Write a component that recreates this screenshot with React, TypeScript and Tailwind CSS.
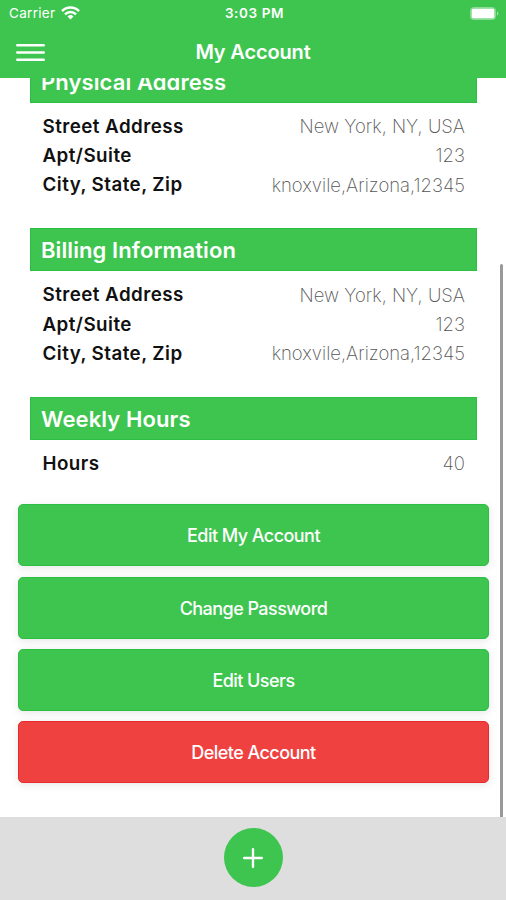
import clsx from "clsx";

const address = [
  { label: "Street Address", value: "New York, NY, USA" },
  { label: "Apt/Suite", value: "123" },
  { label: "City, State, Zip", value: "knoxvile,Arizona,12345" },
];

const sections = [
  { title: "Physical Address", rows: address },
  { title: "Billing Information", rows: address },
  { title: "Weekly Hours", rows: [{ label: "Hours", value: "40" }] },
];

const actions = [
  { label: "Edit My Account", danger: false },
  { label: "Change Password", danger: false },
  { label: "Edit Users", danger: false },
  { label: "Delete Account", danger: true },
];

function StatusBar() {
  return (
    <div className="grid h-[26px] grid-cols-3 items-center pl-[9px] pr-[6px] text-[13.5px]">
      <div className="flex items-center gap-[6px]">
        <span className="pt-px tracking-[0.3px]">Carrier</span>
        <svg width="19" height="14" viewBox="0 0 19 14" fill="none" stroke="currentColor" strokeWidth="2.5">
          <path d="M1 5.1a12 12 0 0 1 17 0" />
          <path d="M4 8.3a7.8 7.8 0 0 1 11 0" />
          <path d="M9.5 13.6 6.5 10.5a4.3 4.3 0 0 1 6 0z" fill="currentColor" stroke="none" />
        </svg>
      </div>
      <span className="pt-px text-center font-semibold tracking-[0.6px]">3:03 PM</span>
      <svg className="justify-self-end" width="30" height="13" viewBox="0 0 30 13">
        <rect x="0.5" y="0.5" width="25" height="12" rx="3" fill="none" stroke="#fff" strokeOpacity="0.4" />
        <rect x="1.5" y="1.5" width="23" height="10" rx="1.5" fill="#fff" />
        <path d="M27 4.2v4.6a2.6 2.6 0 0 0 0-4.6z" fill="#fff" fillOpacity="0.5" />
      </svg>
    </div>
  );
}

function Header() {
  return (
    <header className="relative z-10 h-[78px] shrink-0 bg-[#3ec54f] text-white">
      <StatusBar />
      <nav className="grid h-[52px] grid-cols-[1fr_auto_1fr] items-center px-4">
        <button type="button" aria-label="Open menu" className="w-[29px]">
          <svg width="29" height="20" viewBox="0 0 29 20" stroke="#fff" strokeWidth="2.5" strokeLinecap="round">
            <path d="M1.3 3.2h26.4M1.3 10.5h26.4M1.3 17.8h26.4" />
          </svg>
        </button>
        <h1 className="text-[20px] font-semibold tracking-[-0.15px]">My Account</h1>
      </nav>
    </header>
  );
}

function Section({ title, rows }: (typeof sections)[number]) {
  return (
    <section className="mr-[29px] ml-[30px]">
      <h2 className="flex h-[43px] items-center border border-[#2cbf44] bg-[#3ec54f] pt-[2px] pl-[10px] text-[22px] font-semibold tracking-[0.1px] text-white">
        {title}
      </h2>
      <dl className="px-3 pt-[9.4px] text-[18.5px]">
        {rows.map((row) => (
          <div key={row.label} className="flex h-[29.4px] items-center justify-between">
            <dt className="pl-[0.5px] text-[18.8px] font-semibold tracking-[0.45px] text-[#111]">{row.label}</dt>
            <dd className="font-extralight text-[#555]">{row.value}</dd>
          </div>
        ))}
      </dl>
    </section>
  );
}

export default function App() {
  return (
    <div className="relative flex h-[900px] w-[506px] flex-col overflow-hidden bg-white font-['Inter',sans-serif]">
      <Header />
      <main className="min-h-0 flex-1">
        <div className="-mt-[18.4px] flex flex-col gap-[28.2px]">
          {sections.map((section) => (
            <Section key={section.title} {...section} />
          ))}
        </div>
        <div className="mt-[25.4px] mr-[17px] ml-[18px] flex flex-col gap-[10.3px]">
          {actions.map((action) => (
            <button
              key={action.label}
              type="button"
              className={clsx(
                "h-[62px] rounded-[5px] border pt-px text-[18px] font-medium tracking-[-0.55px] text-white shadow-[0_2px_9px_rgba(0,0,0,0.1)]",
                action.danger ? "border-[#e92a2d] bg-[#f04141]" : "border-[#2cbf44] bg-[#3ec54f]",
              )}
            >
              {action.label}
            </button>
          ))}
        </div>
      </main>
      <div className="absolute top-[264px] right-[3px] h-[553px] w-[3px] rounded-t-full bg-[#999]" />
      <footer className="flex h-[83px] shrink-0 justify-center bg-[#dedede] pt-[11px]">
        <button
          type="button"
          aria-label="Add"
          className="flex size-[59px] items-center justify-center rounded-full bg-[#3ec54f]"
        >
          <svg width="20" height="20" viewBox="0 0 20 20" stroke="#fff" strokeWidth="2.4" strokeLinecap="round">
            <path d="M10 1.2v17.6M1.2 10h17.6" />
          </svg>
        </button>
      </footer>
    </div>
  );
}
